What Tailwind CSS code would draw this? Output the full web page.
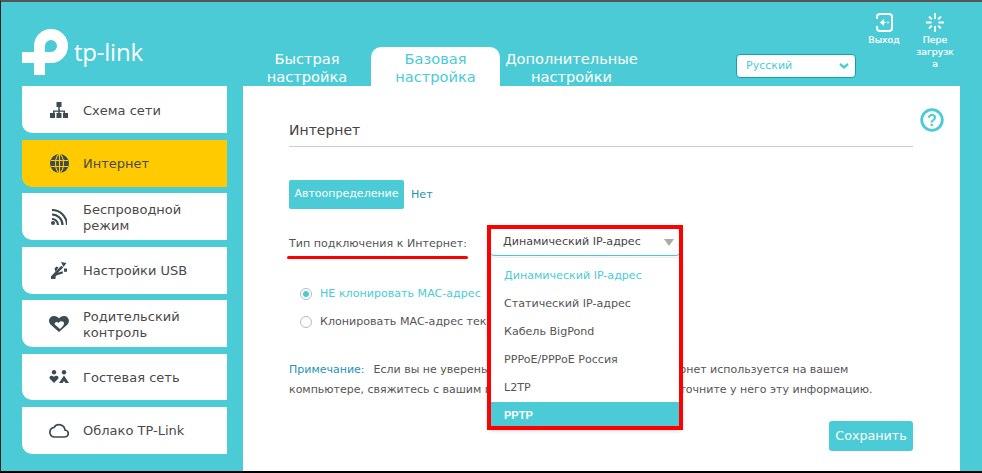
<!DOCTYPE html>
<html lang="ru">
<head>
    <meta charset="UTF-8">
    <title>TP-Link</title>
    <script src="https://cdn.jsdelivr.net/npm/@tailwindcss/browser@4"></script>
</head>
<body class="w-[982px] h-[473px] overflow-hidden bg-[#4acbd6] font-['DejaVu_Sans',sans-serif] text-[#4a4a4a]">
<div class="relative w-[982px] h-[473px] overflow-hidden border-l border-t-2 border-b-2 border-l-[#222] border-t-[#555] border-b-black">

    <!-- header -->
    <header class="h-[84px] flex relative">
        <div class="w-[240px] shrink-0 pl-[21px] pt-[27px]">
            <svg width="124" height="48" viewBox="0 0 124 48">
                <path d="M17.500 46V17A11.500 11.500 0 1 1 29 28.500H0" fill="none" stroke="white" stroke-width="11"/>
                <text x="52" y="32" fill="white" font-family="'Open Sans',sans-serif" font-size="24" textLength="69">tp-link</text>
            </svg>
        </div>
        <nav class="flex items-end text-[14.6px] leading-[18px] text-center">
            <div class="w-[130px] h-[39px] text-white pt-[3px] pl-[2px] overflow-hidden">Быстрая<br>настройка</div>
            <div class="w-[129px] h-[39px] bg-white text-[#4acbd6] rounded-t-[10px] pt-[3px] overflow-hidden">Базовая<br>настройка</div>
            <div class="w-[143px] h-[39px] text-white pt-[3px] overflow-hidden">Дополнительные<br>настройки</div>
        </nav>
        <div class="ml-[93px] mt-[52px] w-[120px] h-[24px] bg-white border border-[#0fa3ad] rounded-[4px] flex items-center justify-between pl-[9px] pr-[5px] text-[11px] text-[#4acbd6]">
            <span>Русский</span>
            <svg width="12" height="8" viewBox="0 0 12 8"><path d="M2 2l4 3.500L10 2" fill="none" stroke="#4acbd6" stroke-width="2.400"/></svg>
        </div>
        <div class="ml-[4px] w-[48px] flex flex-col items-center pt-[11px] text-white text-[9.300px] leading-[12px] [-webkit-text-stroke:0.2px_white]">
            <svg width="18" height="19" viewBox="0 0 18 19" class="mb-[2px]">
                <path d="M2 6V4a3 3 0 0 1 3-3h9a3 3 0 0 1 3 3v11a3 3 0 0 1-3 3H5a3 3 0 0 1-3-3v-2" fill="none" stroke="white" stroke-width="2"/>
                <path d="M5 9.500l4-3.500v7zM9 8.700h1.500v1.600H9zM12 8.700h2v1.600h-2z" fill="white"/>
            </svg>
            <span>Выход</span>
        </div>
        <div class="ml-[3px] w-[48px] flex flex-col items-center pt-[11px] text-white text-[9.300px] leading-[12px] text-center [-webkit-text-stroke:0.2px_white]">
            <svg width="18" height="19" viewBox="0 0 18 19" class="mb-[2px]" stroke="white" stroke-width="1.900">
                <path d="M9 0v6M9 13v6M0 9.500h5.500M12.500 9.500h5.500M3 3.500l2.800 2.800M12.200 12.700l2.800 2.800M15 3.500l-2.800 2.800M5.800 12.700L3 15.500"/>
            </svg>
            <span>Пере<br>загрузк<br>а</span>
        </div>
    </header>

    <div class="flex items-start">
        <!-- sidebar -->
        <aside class="ml-[21px] w-[205px] shrink-0 flex flex-col text-[13px] leading-[16px]">
            <a class="h-[47px] mb-[7px] bg-white rounded-bl-[10px] flex items-center">
                <span class="w-[61px] flex justify-center pl-[27px] pr-[14px] shrink-0">
                    <svg width="18" height="16" viewBox="0 0 18 16" fill="#3c4a52" class="shrink-0"><path d="M6.500 0h5v5h-5zM8.250 5h1.500v3.500H15V11h-1.500V9.800H9.750V11h-1.500V9.800H4.500V11H3V8.500h5.250z"/><path d="M0 11h5v5H0zM6.500 11h5v5h-5zM13 11h5v5h-5z"/></svg>
                </span>
                <span class="pt-[2px]">Схема сети</span>
            </a>
            <a class="h-[47px] mb-[6px] bg-[#ffcb00] rounded-bl-[10px] flex items-center">
                <span class="w-[61px] flex justify-center pl-[27px] pr-[14px] shrink-0">
                    <svg width="19" height="19" viewBox="0 0 19 19" class="shrink-0"><circle cx="9.500" cy="9.500" r="9.500" fill="#3c4a52"/><g fill="none" stroke="#ffcb00" stroke-width="1.100"><ellipse cx="9.500" cy="9.500" rx="4" ry="9"/><path d="M9.500 0v19M1 6.500h17M1 12.500h17"/></g></svg>
                </span>
                <span>Интернет</span>
            </a>
            <a class="h-[47px] mb-[7px] bg-white rounded-bl-[10px] flex items-center">
                <span class="w-[61px] flex justify-center pl-[27px] pr-[14px] shrink-0">
                    <svg width="16" height="16" viewBox="0 0 16 16" fill="none" stroke="#3c4a52" stroke-width="2.100" class="shrink-0"><path d="M1 1A15 15 0 0 1 16 16M1 5.500A10.500 10.500 0 0 1 11.500 16M1 10A6 6 0 0 1 7 16"/><circle cx="2" cy="14" r="2" fill="#3c4a52" stroke="none"/></svg>
                </span>
                <span class="pt-[2px]">Беспроводной<br>режим</span>
            </a>
            <a class="h-[47px] mb-[6px] bg-white rounded-bl-[10px] flex items-center">
                <span class="w-[61px] flex justify-center pl-[27px] pr-[14px] shrink-0">
                    <svg width="16" height="17" viewBox="0 0 16 17" fill="#3c4a52" class="shrink-0"><path d="M.800 13.500l9.500-9.800 2 1.800-5.500 5.300 5-1.500v2.200l-6 1.800-1.300 1.500A2.400 2.400 0 1 1 .800 13.500z"/><path d="M10 0l5.500 1-3 4zM3.500 6.500l2-2 2 1-3 4.500zM13 6.500h3v3.300h-3z"/></svg>
                </span>
                <span>Настройки USB</span>
            </a>
            <a class="h-[47px] mb-[7px] bg-white rounded-bl-[10px] flex items-center">
                <span class="w-[61px] flex justify-center pl-[27px] pr-[14px] shrink-0">
                    <svg width="20" height="16" viewBox="0 0 20 16" class="shrink-0"><path d="M10 16L1.500 8.500C-1.500 5 .5 0 5 0c2.300 0 4 1 5 2.500C11 1 12.700 0 15 0c4.500 0 6.500 5 3.500 8.500z" fill="#3c4a52"/><path d="M11 13L5.800 8.500C5 6.300 8 4.800 9.500 7 11 4.500 15 5 15 7.500c0 1-.5 1.800-1 2.500z" fill="white"/></svg>
                </span>
                <span class="pt-[2px]">Родительский<br>контроль</span>
            </a>
            <a class="h-[46px] mb-[7px] bg-white rounded-bl-[10px] flex items-center">
                <span class="w-[61px] flex justify-center pl-[27px] pr-[14px] shrink-0">
                    <svg width="20" height="14" viewBox="0 0 20 14" fill="#3c4a52" class="shrink-0"><circle cx="5" cy="2.200" r="2.200"/><circle cx="15" cy="2.200" r="2.200"/><path d="M5 13L.8 8.700c-1-1.500.2-3 1.700-3 1 0 2 .5 2.500 1.200.5-.7 1.500-1.200 2.500-1.200 1.500 0 2.700 1.500 1.700 3zM15 5.500l5 7.500h-3.500L15 11l-1.500 2H10z"/></svg>
                </span>
                <span class="pt-[2px]">Гостевая сеть</span>
            </a>
            <a class="h-[47px] bg-white rounded-bl-[10px] flex items-center">
                <span class="w-[61px] flex justify-center pl-[27px] pr-[14px] shrink-0">
                    <svg width="20" height="15" viewBox="0 0 20 15" fill="none" stroke="#3c4a52" stroke-width="1.700" class="shrink-0"><path d="M5 14h10.500a3.500 3.500 0 0 0 .5-7 6 6 0 0 0-11-2.500A4.800 4.800 0 0 0 5 14z"/></svg>
                </span>
                <span class="pt-[1px]">Облако TP-Link</span>
            </a>
        </aside>

        <!-- main panel -->
        <main class="relative ml-[16px] w-[717px] h-[385px] bg-white pl-[46px] pr-[47px] text-[11.100px]">
            <svg width="24" height="24" viewBox="0 0 24 24" class="absolute right-[16px] top-[22px]">
                <circle cx="12" cy="12" r="10.300" fill="none" stroke="#4acbd6" stroke-width="2.800"/>
                <text x="12" y="18" text-anchor="middle" font-family="'Liberation Sans',sans-serif" font-weight="700" font-size="16" fill="#4acbd6">?</text>
            </svg>

            <h2 class="h-[61px] border-b border-[#ccc] pt-[34px] text-[14px] leading-[20px] text-[#444]">Интернет</h2>

            <div class="flex mt-[33px] items-start">
                <button class="h-[29px] w-[115px] bg-[#4acbd6] text-white rounded-[2px] text-[11px]">Автоопределение</button>
                <span class="ml-[7px] mt-[8px] leading-[14px] text-[#1f93b3]">Нет</span>
            </div>

            <div class="mt-[21px] h-[29px] flex items-center text-[#555]">Тип подключения к Интернет:</div>

            <div class="mt-[28px] pl-[11px] flex items-center text-[#4acbd6] h-[14px]">
                <span class="w-[12px] h-[12px] rounded-full border border-[#bbb] flex items-center justify-center mr-[8px]"><span class="w-[6px] h-[6px] rounded-full bg-[#4acbd6]"></span></span>
                НЕ клонировать MAC-адрес
            </div>
            <div class="mt-[14px] pl-[11px] flex items-center h-[14px] text-[#555]">
                <span class="w-[12px] h-[12px] rounded-full border border-[#bbb] mr-[8px]"></span>
                Клонировать MAC-адрес текущего компьютера
            </div>

            <p class="mt-[31px] w-[624px] leading-[20px] text-[#555] text-[11px]"><span class="text-[#1f93b3] mr-[2px]">Примечание:</span>&nbsp; Если вы не уверены, какой тип подключения к Интернет используется на вашем компьютере, свяжитесь с вашим поставщиком Интернет-услуг и уточните у него эту информацию.</p>

            <div class="flex justify-end mt-[21px]">
                <button class="w-[84px] h-[30px] bg-[#4acbd6] text-white rounded-[3px] text-[12.700px]">Сохранить</button>
            </div>

            <!-- open select -->
            <div class="absolute left-[247px] top-[141px] w-[190px] h-[29px] bg-white border border-[#4acbd6] border-t-0 rounded-[4px] flex items-center justify-between pl-[12px] pr-[5px] pt-[2px] text-[#444]">
                <span>Динамический IP-адрес</span>
                <svg width="10" height="7" viewBox="0 0 10 7"><path d="M0 0h10L5 7z" fill="#aaa"/></svg>
            </div>
            <ul class="absolute left-[247px] top-[172px] w-[190px] bg-white rounded-t-[4px] shadow-[0_2px_5px_rgba(0,0,0,0.4)] text-[#555] leading-[28px] pt-[4px]">
                <li class="pl-[14px] text-[#4acbd6]">Динамический IP-адрес</li>
                <li class="pl-[14px]">Статический IP-адрес</li>
                <li class="pl-[14px]">Кабель BigPond</li>
                <li class="pl-[14px]">PPPoE/PPPoE Россия</li>
                <li class="pl-[14px]">L2TP</li>
                <li class="pl-[14px] h-[25px] leading-[27px] bg-[#4acbd6] text-white font-bold font-['Liberation_Sans',sans-serif] text-[11px]">PPTP</li>
            </ul>

            <!-- red annotations -->
            <div class="absolute left-[44px] top-[170px] w-[181px] h-[3px] bg-[#f00] rounded-full"></div>
            <div class="absolute left-[244px] top-[139px] w-[196px] h-[205px] border-[4px] border-[#f00]"></div>
        </main>
    </div>
</div>
</body>
</html>
